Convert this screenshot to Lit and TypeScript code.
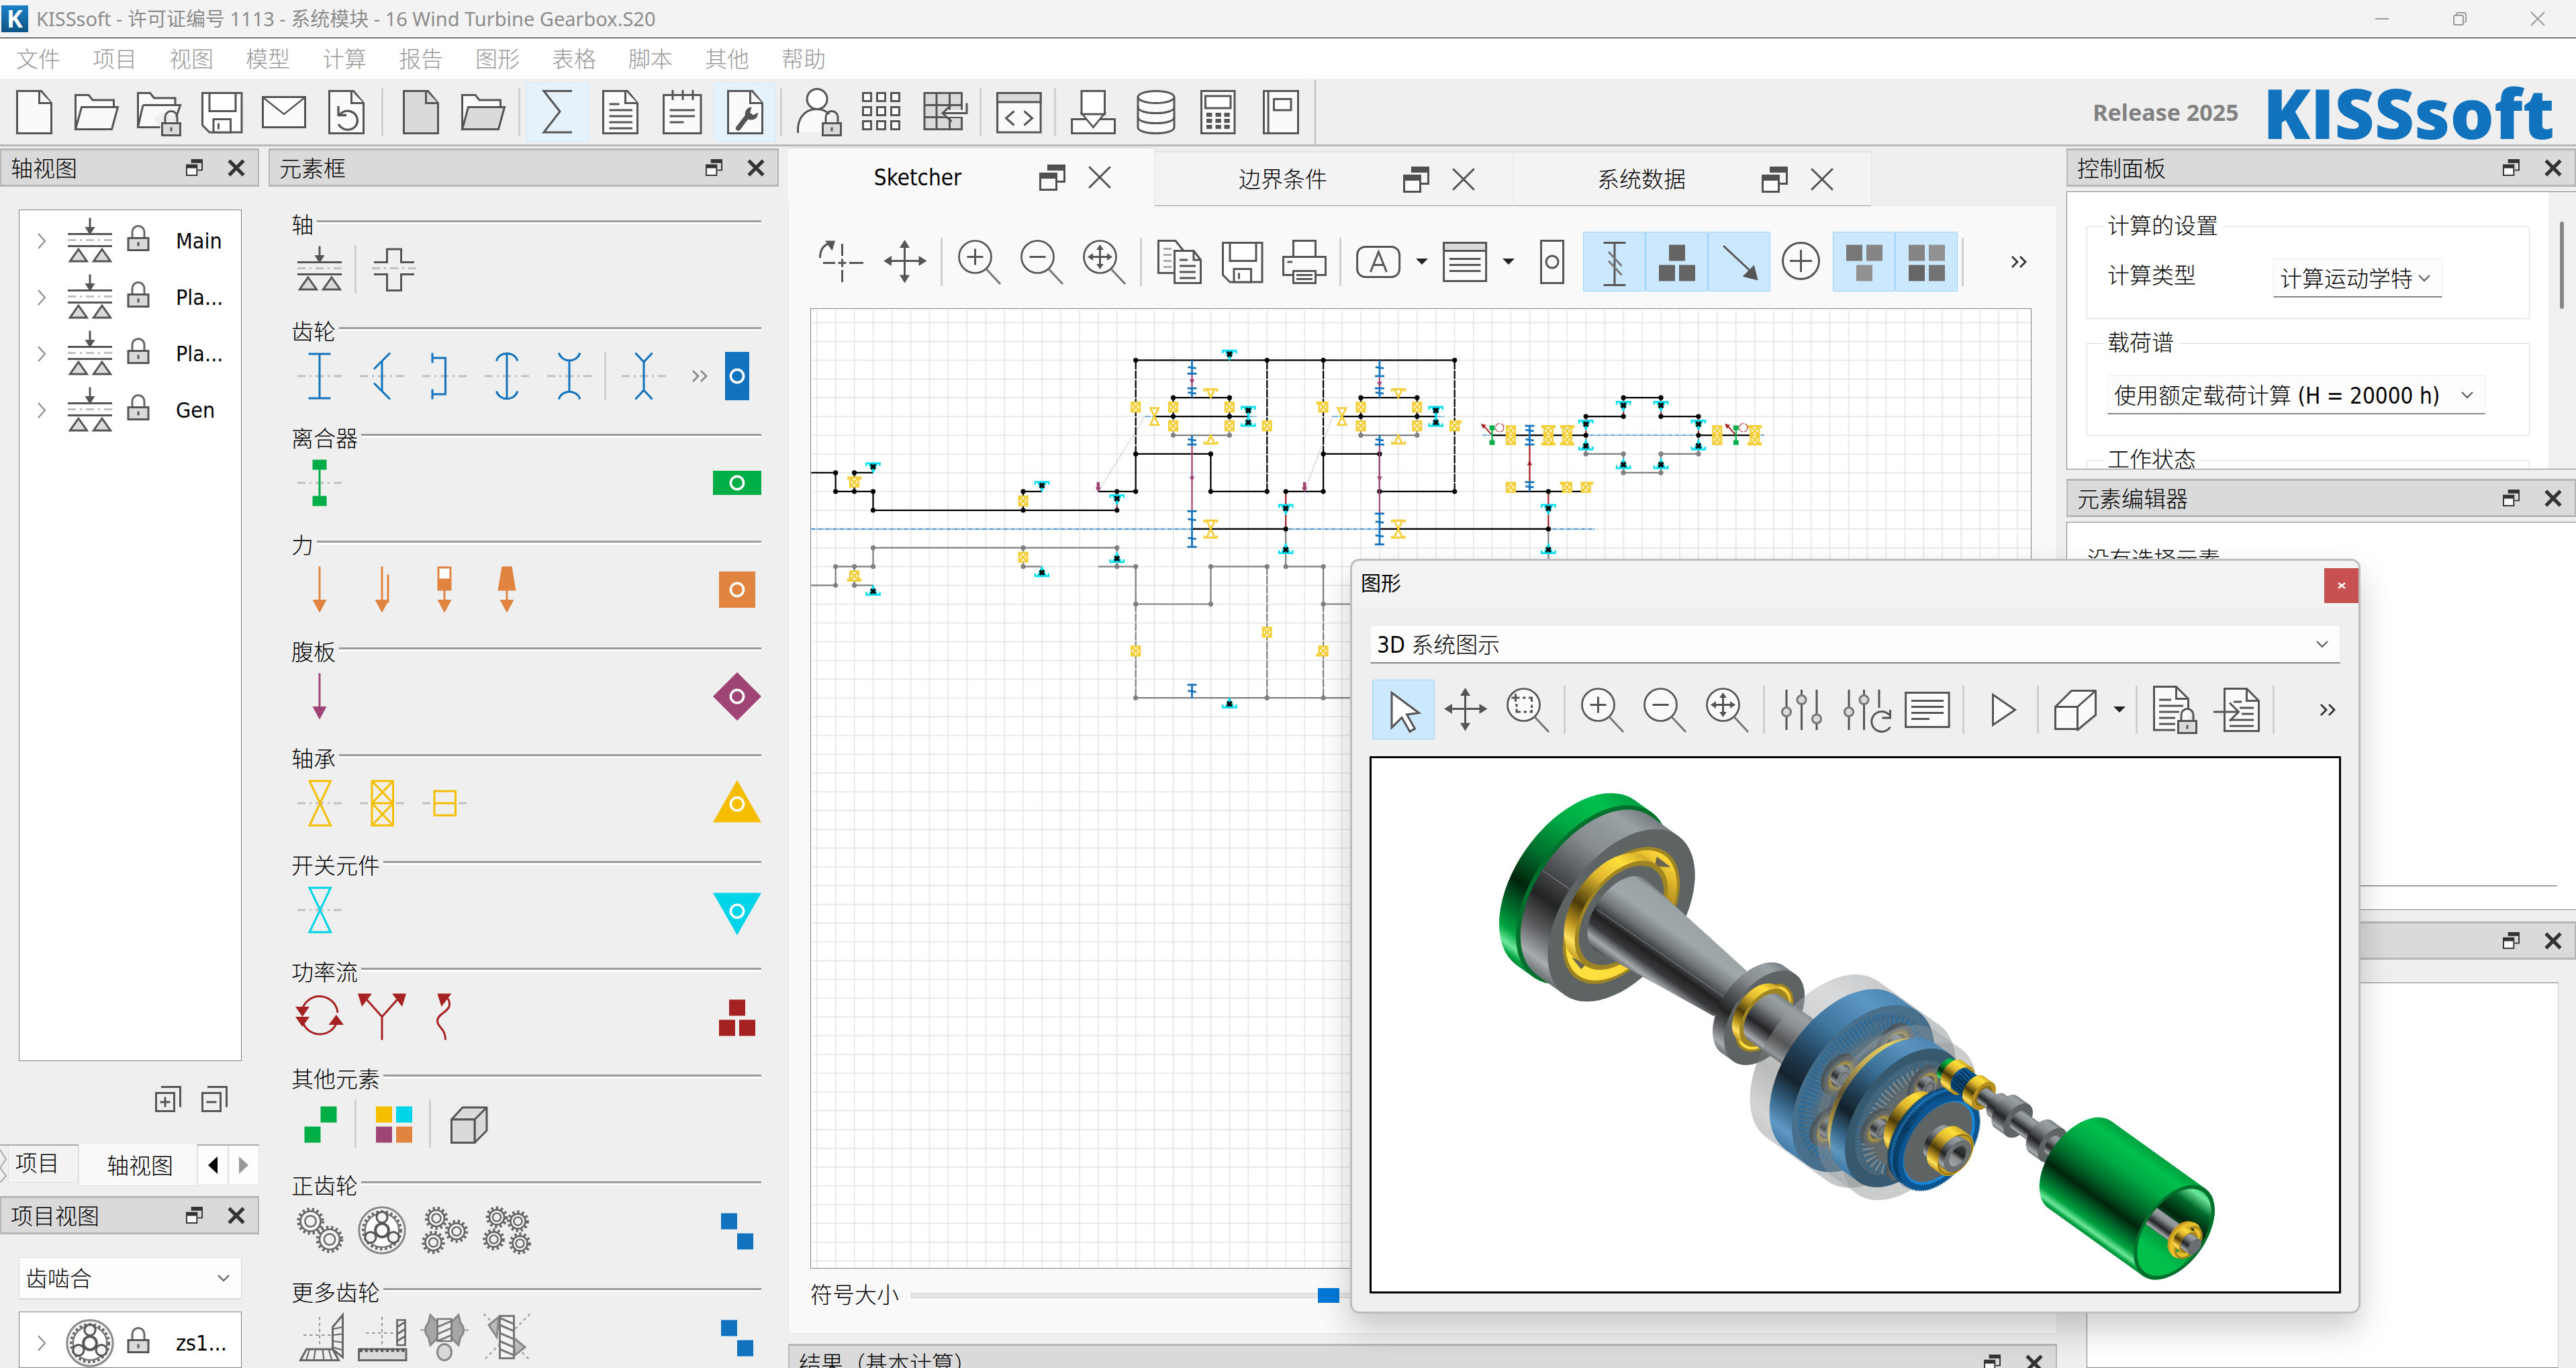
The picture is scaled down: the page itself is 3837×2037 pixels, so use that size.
import { LitElement, html, svg, css, nothing } from "lit";
import { customElement, property, state } from "lit/decorators.js";
import { classMap } from "lit/directives/class-map.js";

/* ---------------------------------------------------------------- icons */

const LINE = "#555";
const PAPER = "#fafafa";
const GREY = "#dadada";
const BLUE = "#1173bd";
const GREEN = "#00ae45";
const ORANGE = "#e08440";
const PURPLE = "#9f4576";
const YELLOW = "#f6be00";
const CYAN = "#00d4e8";
const RED = "#a62222";

const lock = svg`<path d="M15 17v-2.5a3 3 0 0 1 6 0v2.5" fill="none" stroke=${LINE}/>
  <path d="M13.500 17.500h9v6h-9z" fill=${GREY} stroke=${LINE}/><path d="M18 19.500v2" stroke=${LINE}/>`;
const docShape = (fill: string) => svg`<path d="M3.500 1.500h12l5 6v15h-17z" fill=${fill} stroke=${LINE}/>
  <path d="M14.500 1.500v6h6" fill=${fill} stroke=${LINE}/>`;
const folderShape = (fill: string) => svg`<path d="M1.500 20.500v-17h6.500l2 2.500h10.500v4" fill="#fafafa" stroke=${LINE}/>
  <path d="M4.500 9.500h18l-3 11h-18z" fill=${fill} stroke=${LINE}/>`;
const axisDash = svg`<path d="M1 12h22" stroke="#c0c0c0" stroke-dasharray="4 2 1 2"/>`;
const lens = svg`<circle cx="9.500" cy="9.500" r="8" fill=${PAPER} stroke=${LINE} stroke-width=".9"/><path d="M15 15.500l7 7.500" stroke="#777"/>`;
const arrows4 = svg`<path d="M11.500 2v19M2 11.500h19" stroke=${LINE}/>
  <path d="M11.500 1l2.500 4h-5zM11.500 22.500l2.500-4h-5zM1 11.500l4-2.500v5zM22.500 11.500l-4-2.500v5z" fill=${LINE}/>`;
const floppy = svg`<path d="M2.500 2.500h19.500v19.500h-16l-3.500-3.500z" fill="#fff" stroke=${LINE}/>
  <path d="M6 2.500h13v9h-13z" fill="#fff" stroke=${LINE}/><path d="M8 15.500h8.500v6.500h-8.500z" fill="#fff" stroke=${LINE}/><path d="M10.500 17.500v3" stroke=${LINE}/>`;
const ring = (y = 12) => svg`<circle cx="12" cy=${y} r="3.200" fill="none" stroke="#fff" stroke-width="1.200"/>`;
const cog = (x: number, y: number, r: number) => svg`
  <circle cx=${x} cy=${y} r=${r + 1} fill="none" stroke="#666" stroke-width="1.500" stroke-dasharray="1.100 1.300"/>
  <circle cx=${x} cy=${y} r=${r} fill="#f4f4f4" stroke="#666" stroke-width=".9"/>
  <circle cx=${x} cy=${y} r=${r * 0.55} fill="#f0f0f0" stroke="#666" stroke-width=".8"/>`;
const planetary = svg`<circle cx="12" cy="12" r="11.400" fill="#f4f4f4" stroke="#888" stroke-width="1"/>
  <circle cx="12" cy="12" r="9.300" fill="none" stroke="#666" stroke-width="1.400" stroke-dasharray="1.200 1.200"/>
  <circle cx="12" cy="12" r="8.400" fill="#fff" stroke="#777" stroke-width=".8"/>
  <circle cx="12" cy="12" r="3.300" fill="#fff" stroke="#555" stroke-width="1.300"/>
  <circle cx="12" cy="5.500" r="2.700" fill="#f4f4f4" stroke="#555"/><circle cx="6.300" cy="15.500" r="2.700" fill="#f4f4f4" stroke="#555"/>
  <circle cx="17.700" cy="15.500" r="2.700" fill="#f4f4f4" stroke="#555"/>`;
const shaftSupport = svg`<path d="M12 .5v7" stroke=${LINE}/><path d="M9.500 5h5l-2.500 4z" fill=${LINE}/>
  <path d="M1 8.500h22M1 14.500h22" stroke=${LINE}/><path d="M1 11.500h22" stroke="#c0c0c0" stroke-dasharray="4 2 1 2"/>
  <path d="M6.300 16l4.200 6h-8.400zM18 16l4.200 6h-8.400z" fill=${GREY} stroke=${LINE}/>`;
const forceArrow = (c: string) => svg`<path d="M12 .5v19" stroke=${c}/><path d="M8.500 17h7l-3.500 6.500z" fill=${c}/>`;
const squares = (c: string[], at: number[][]) => at.map((p, i) => svg`<rect x=${p[0]} y=${p[1]} width="8" height="8" fill=${c[i % c.length]}/>`);
const hourglass = (c: string) => svg`${axisDash}<path d="M7 1h10.500l-10.500 22h10.500z" fill="none" stroke=${c}/>`;

const ICONS: Record<string, unknown> = {
  doc: docShape(PAPER),
  docGrey: docShape(GREY),
  folder: folderShape(PAPER),
  folderGrey: folderShape(GREY),
  folderLock: svg`<path d="M1.500 19.500v-17h6l2 2.500h10.500v3.500" fill=${PAPER} stroke=${LINE}/>
    <path d="M4 8.500h18.500l-2 6M4 8.500l-2.500 11h11" fill=${PAPER} stroke=${LINE}/>${lock}`,
  save: floppy,
  mail: svg`<path d="M1.500 4.500h21v15h-21z" fill=${PAPER} stroke=${LINE}/><path d="M2 5l10 8 10-8" fill="#fff" stroke=${LINE} stroke-width=".8"/>`,
  restore: svg`${docShape(PAPER)}<path d="M8 9v4.500h4M8.500 13.500c3-4 9-2 9 3-.5 4.500-6.500 6-9.500 1.500" fill="none" stroke=${LINE} stroke-width="1.100"/>`,
  sigma: svg`<path d="M19 1.500h-14l8 10.200-8 10.300h14" fill="none" stroke=${LINE}/>`,
  report: svg`${docShape(PAPER)}<path d="M6.500 8h5M6.500 11h11.500M6.500 14h11.500M6.500 17h11.500M6.500 20h11.500" stroke=${LINE}/>`,
  notepad: svg`<path d="M2.500 3.500h18.500v19h-18.500z" fill=${PAPER} stroke=${LINE}/><path d="M7 1v5M12 1v5M17 1v5M5.500 11h12.500M5.500 14h12.500M5.500 17h7" stroke=${LINE}/>`,
  wrench: svg`${docShape(PAPER)}<path d="M8.500 20l5-6.500" stroke=${LINE} stroke-width="2.400" stroke-linecap="round"/>
    <path d="M12.500 15c-1.500-3 .3-5.500 2.700-5.500l-.8 2.700 1.600 1.300 2.300-1.300c.2 3-2.500 4.800-5.800 2.800z" fill=${LINE}/>`,
  userLock: svg`<circle cx="10.700" cy="5.500" r="5" fill="#fff" stroke=${LINE}/><path d="M1.200 22c-.5-7 3-11.500 9.500-11.500 4 0 6 2 7 4.500l-5 7z" fill=${PAPER}/>
    <path d="M1.200 22.300c-.5-7 3-11.800 9.500-11.800 2.500 0 4.500 1 6 2.500" fill="none" stroke=${LINE}/>${lock}`,
  grid: [2, 9, 16].flatMap((y) => [2, 9, 16].map((x) => svg`<rect x=${x + 0.5} y=${y + 0.5} width="4" height="4" fill="#fff" stroke=${LINE}/>`)),
  tableIn: svg`<path d="M2 2.500h18.500v18h-18.500z" fill=${GREY} stroke=${LINE}/><path d="M8 2.500v18M14.500 2.500v18M2 8.500h18M2 14.500h18" stroke=${LINE}/>
    <path d="M23.500 6v6.600h-12" stroke="#efefef" stroke-width="3.500" fill="none"/><path d="M23 7.500v5h-12M15.500 8.300l-4.500 4.200 4.500 4.200" fill="none" stroke=${LINE}/>`,
  script: svg`<path d="M1.200 2.500h21.500v19.500h-21.500z" fill=${PAPER} stroke=${LINE}/><path d="M1.200 2.500h21.500v4.500h-21.500z" fill=${GREY} stroke=${LINE}/>
    <path d="M9.500 11.500l-4 3.500 4 3.500M14.500 11.500l4 3.500-4 3.500" fill="none" stroke=${LINE}/>`,
  download: svg`<path d="M1.200 15.500h21.300v7h-21.300z" fill=${PAPER} stroke=${LINE}/><path d="M6 12.500l5.800 7 5.700-7z" fill="#fff" stroke=${LINE} stroke-width=".9"/><path d="M6 1.500h11.500v11.500h-11.500z" fill="#fff" stroke=${LINE}/>`,
  db: svg`<path d="M3 4.500v15c0 4 18 4 18 0v-15" fill=${PAPER} stroke=${LINE}/><ellipse cx="12" cy="4.500" rx="9" ry="3" fill="#fff" stroke=${LINE}/>
    <path d="M3 9.500c0 4 18 4 18 0M3 14.500c0 4 18 4 18 0" fill="none" stroke=${LINE}/>`,
  calc: svg`<path d="M3.500 1.500h16.500v21h-16.500z" fill=${PAPER} stroke=${LINE}/><path d="M5.500 4h12.500v6h-12.500z" fill="#fff" stroke=${LINE}/>
    ${[12.3, 15.3, 18.3].map((y) => [6, 10.5, 14.8].map((x) => svg`<rect x=${x} y=${y} width="2.800" height="2" fill=${LINE}/>`))}`,
  book: svg`<path d="M3.500 1.500h17v21h-17z" fill=${PAPER} stroke=${LINE}/><path d="M5.700 1.500v21" stroke=${LINE}/><path d="M8.500 5.500h8.500v5.500h-8.500z" fill="#fff" stroke=${LINE}/>`,
  axis: svg`<path d="M11.500 3v6M11.500 16v6M2 12.500h6M15 12.500h7M9.500 12.500h4M11.500 10.500v4" stroke=${LINE}/><path d="M.5 10c0-4 1.500-6 4-7" fill="none" stroke=${LINE}/><path d="M3 1.500h5l-1.500 5z" fill=${LINE}/>`,
  move: arrows4,
  zoomIn: svg`${lens}<path d="M5.500 9.500h8M9.500 5.500v8" stroke=${LINE}/>`,
  zoomOut: svg`${lens}<path d="M5.500 9.500h8" stroke=${LINE}/>`,
  zoomFit: svg`${lens}<path d="M9.500 5v9M5 9.500h9" stroke=${LINE}/><path d="M9.500 3.300l1.800 2.700h-3.600zM9.500 15.700l1.800-2.700h-3.600zM3.300 9.500l2.700-1.800v3.600zM15.700 9.500l-2.700-1.800v3.600z" fill=${LINE}/>`,
  zoomRect: svg`${lens}<path d="M5.500 4v4M3.500 6h4M9 6h1.500M12 6h1.500v2M13.500 9.500v1.500M6 9v1.500M6 11.500v1.500h2M9.500 13h1.500M12.500 13h1v-1" fill="none" stroke=${LINE}/>`,
  copy: svg`<path d="M1.500 1.500h8.500l4 5v11h-12.500z" fill=${PAPER} stroke=${LINE}/><path d="M4 5.500h4M4 8.500h4M4 11.500h4M4 14.500h4" stroke="#aaa"/>
    <path d="M9.500 6.500h9.500l3.500 4.500v11.500h-13z" fill=${PAPER} stroke=${LINE}/><path d="M19 6.500v4.500h3.500M12 11h4M12 14h8M12 17h8M12 20h8" fill="none" stroke=${LINE}/>`,
  print: svg`<path d="M6.500 1.500h11v8h-11z" fill="#fff" stroke=${LINE}/><path d="M1.500 9.500h21v9h-21z" fill=${PAPER} stroke=${LINE}/>
    <path d="M6.500 16.500h11v6h-11z" fill="#fff" stroke=${LINE}/><path d="M3.500 12h2.500M8 18.500h8M8 20.500h8" stroke=${LINE}/>`,
  label: svg`<rect x="1.200" y="4.500" width="21" height="15" rx="4" fill=${PAPER} stroke=${LINE}/><path d="M7.800 17l4-10 4 10M9.300 13.500h5" fill="none" stroke=${LINE}/>`,
  list: svg`<path d="M1.200 2.500h21v19h-21z" fill=${PAPER} stroke=${LINE}/><path d="M1.200 2.500h21v4h-21z" fill=${GREY} stroke=${LINE}/><path d="M4 10.500h15.500M4 13.500h15.500M4 16.500h15.500" stroke=${LINE}/>`,
  pinDoc: svg`<path d="M6.500 1.500h11v21h-11z" fill=${PAPER} stroke=${LINE}/><circle cx="12" cy="12" r="3" fill="none" stroke=${LINE}/>`,
  gearSym: svg`<path d="M6.500 2.500h11M12 2.500v21M6.500 23.500h11" stroke=${LINE}/><path d="M9 7l6.500 7M9 11.500l6.500 7" stroke="#777"/>`,
  blocks3: squares(["#646464"], [[8, 3.5], [3, 13.5], [13, 13.5]]),
  blocksV: squares(["#777", "#858585", "#919191"], [[3, 3.5], [13, 3.5], [8, 13.5]]),
  blocks4: squares(["#858585", "#919191", "#666", "#737373"], [[3, 3.5], [13, 3.5], [3, 13.5], [13, 13.5]]),
  diag: svg`<path d="M4 4l15 14" stroke=${LINE}/><path d="M20.500 20.500l-1.500-6-4.500 4.500z" fill=${LINE} stroke=${LINE}/>`,
  plus: svg`<circle cx="11.500" cy="11.500" r="9" fill=${PAPER} stroke=${LINE}/><path d="M11.500 6v11M6 11.500h11" stroke=${LINE}/>`,
  more: svg`<path d="M7 8l4 4-4 4M13 8l4 4-4 4" fill="none" stroke="currentColor" stroke-width="1.400"/>`,
  pointer: svg`<path d="M6 3.500l13.500 10-6 .8 4 7-2.500 1.500-4-7-5 5z" fill="#fff" stroke=${LINE}/>`,
  sliders: svg`<path d="M4 2v20M11.500 2v20M19 2v20" stroke=${LINE}/><circle cx="4" cy="13" r="2.200" fill=${GREY} stroke="#777"/><circle cx="11.500" cy="7" r="2.200" fill=${GREY} stroke="#777"/><circle cx="19" cy="16.500" r="2.200" fill=${GREY} stroke="#777"/>`,
  slidersReset: svg`<path d="M4 2v20M11.500 2v20M19 2v9" stroke=${LINE}/><circle cx="4" cy="13" r="2.200" fill=${GREY} stroke="#777"/><circle cx="11.500" cy="7" r="2.200" fill=${GREY} stroke="#777"/>
    <path d="M24 14.500a5 5 0 1 0 .5 6M24.500 12v4h-4" fill="none" stroke=${LINE}/>`,
  text: svg`<path d="M1.200 3.500h21.500v17h-21.500z" fill=${PAPER} stroke=${LINE}/><path d="M4 7.500h16M4 10.500h16M4 13.500h16M4 16.500h9" stroke=${LINE}/>`,
  play: svg`<path d="M7.500 4.500l11 7.500-11 7.500z" fill=${PAPER} stroke=${LINE}/>`,
  cube: svg`<path d="M1.500 10.500l8-8h12l-9 8zM21.500 2.500v12l-9 7.500v-11.500" fill=${PAPER} stroke=${LINE} stroke-linejoin="round"/><path d="M1.500 10.500h11v11h-11z" fill=${PAPER} stroke=${LINE}/>`,
  docLock: svg`<path d="M1.500 .5h11l6 6v15.500h-17z" fill=${PAPER}/><path d="M18.500 12v-5.500l-6-6h-11v21.500h10.500M12.500 .5v6h6M4 7h6M4 10h12M4 13h10M4 16h8M4 19h8" fill="none" stroke=${LINE}/>${lock}`,
  docImport: svg`<path d="M5.500 1.500h11l6 6v15h-17z" fill=${PAPER} stroke=${LINE}/><path d="M16.500 1.500v6h6M10 8h4M13 11h7M14 14h6M8 17h12M8 20h12" fill="none" stroke=${LINE}/>
    <path d="M0 13h12M8 8.500l4.500 4.500-4.500 4.500" fill="none" stroke=${LINE}/>`,
  shaft: shaftSupport,
  shaftStep: svg`<path d="M2 8.500h6.500v-6.500h7v6.500h6.500M2 14.500h6.500v8h7v-8h6.500" fill="none" stroke=${LINE}/><path d="M1 11.500h22" stroke="#c0c0c0" stroke-dasharray="4 2 1 2"/>`,
  g1: svg`${axisDash}<path d="M6.500 1h11M12 1v22M6.500 23h11" stroke=${BLUE}/>`,
  g2: svg`${axisDash}<path d="M16 .5l-8 8M12 4.500v15M16 23.500l-8-8" fill="none" stroke=${BLUE}/>`,
  g3: svg`${axisDash}<path d="M6 .5v5M6 3h6.500v18h-6.500M6 18.500v5" fill="none" stroke=${BLUE}/>`,
  g4: svg`${axisDash}<path d="M12 1v22M6.800 4.500c1.500-5 9-5 10.500 0M6.800 19.500c1.500 5 9 5 10.500 0" fill="none" stroke=${BLUE}/>`,
  g5: svg`${axisDash}<path d="M12 4.500v15M6.800 .5c1.500 5 9 5 10.500 0M6.800 23.500c1.500-5 9-5 10.500 0" fill="none" stroke=${BLUE}/>`,
  g6: svg`${axisDash}<path d="M12 5v14M7.800 .5l4.200 4.500 4.200-4.500M7.800 23.500l4.200-4.500 4.200 4.500" fill="none" stroke=${BLUE}/>`,
  gAll: svg`<path d="M6 0h12v24h-12z" fill=${BLUE}/>${ring()}`,
  clutch: svg`${axisDash}<path d="M12 3v18" stroke=${GREEN}/><path d="M8.500 .5h7v5h-7zM8.500 18.500h7v5h-7z" fill=${GREEN}/>`,
  clutchAll: svg`<path d="M0 6h24v12h-24z" fill=${GREEN}/>${ring()}`,
  f1: forceArrow(ORANGE),
  f2: svg`${forceArrow(ORANGE)}<path d="M15 4.500v14" stroke=${ORANGE}/>`,
  f3: svg`${forceArrow(ORANGE)}<path d="M8.500 .5h7v12h-7z" fill=${ORANGE}/><path d="M9.500 1.500h5v5h-5z" fill="#fff"/>`,
  f4: svg`${forceArrow(ORANGE)}<path d="M9.500 .5h5l2 12h-9z" fill=${ORANGE}/>`,
  fAll: svg`<path d="M3 3h18v18h-18z" fill=${ORANGE}/>${ring()}`,
  web: forceArrow(PURPLE),
  webAll: svg`<path d="M12 0l12 12-12 12-12-12z" fill=${PURPLE}/>${ring()}`,
  b1: hourglass(YELLOW),
  b2: svg`${axisDash}<path d="M7 1h10.500v22h-10.500zM7 12h10.500M7 1l10.500 11M17.500 1l-10.500 11M7 12l10.500 11M17.500 12l-10.500 11" fill="#f2efe6" stroke=${YELLOW}/>`,
  b3: svg`${axisDash}<path d="M7 6h10.500v12h-10.500zM7 12h10.500" fill="#f0efec" stroke=${YELLOW}/>`,
  bAll: svg`<path d="M12 .5l12 21h-24z" fill=${YELLOW}/>${ring(12.4)}`,
  sw: hourglass(CYAN),
  swAll: svg`<path d="M0 3.500h24l-12 21z" fill=${CYAN}/>${ring(12.6)}`,
  p1: svg`<path d="M3.500 8a9 9 0 0 1 17.500 2M4 15.500a9 9 0 0 0 16.500-.5" fill="none" stroke=${RED}/>
    <path d="M0 7h7l-3.500 5zM0 12h7l-3.500 5zM16.500 16h7.500l-3.700-5z" fill=${RED}/>`,
  p2: svg`<path d="M12 23.500v-11.500l-8-9M12 12l8-9" fill="none" stroke=${RED}/><path d="M0 .5h7l-5 6.500zM24 .5h-7l5 6.500z" fill=${RED}/>`,
  p3: svg`<path d="M12.500 23.500c0-6-4-6-4-9.500s6-4.500 6-8-1.500-3.500-3-3.500" fill="none" stroke=${RED}/><path d="M8.500 .5h7l-5 6.500z" fill=${RED}/>`,
  pAll: squares([RED], [[8, 3.5], [3, 13.5], [13, 13.5]]),
  o1: squares([GREEN], [[12.5, 3.5], [4.5, 13.5]]),
  o2: squares([YELLOW, CYAN, PURPLE, ORANGE], [[3, 3.5], [13, 3.5], [3, 13.5], [13, 13.5]]),
  o3: svg`<path d="M3.500 10l5.500-6h12l-6 6zM21 4v11.500l-6 6v-11.500" fill=${GREY} stroke=${LINE} stroke-linejoin="round"/><path d="M3.500 10h11.500v11.500h-11.500z" fill=${GREY} stroke=${LINE}/>`,
  s1: svg`${cog(7.5, 7.5, 5)}${cog(17, 16.5, 5)}`,
  s2: planetary,
  s3: svg`${cog(8, 6, 4)}${cog(18, 12.5, 4)}${cog(6.5, 18, 4)}`,
  s4: svg`${cog(7, 5.5, 3.7)}${cog(17.5, 7.5, 3.7)}${cog(5.5, 16.5, 3.7)}${cog(18.5, 18.5, 3.7)}`,
  sAll: squares([BLUE], [[4, 3.5], [12, 13.5]]),
  m1: svg`<path d="M12 2v15M4 11h14" stroke="#999" stroke-dasharray="1.500 1.500" stroke-width=".7"/>
    <path d="M2.500 23.500l3-5.500h13l3 5.500z" fill="#eee" stroke="#666"/><path d="M7 18l-1.500 5M10 18l-.8 5M13.500 18l.6 5M16.500 18l1.500 5" stroke="#666" stroke-width=".7"/>
    <path d="M23.500 1v21l-5-4v-11z" fill="#eee" stroke="#666"/><path d="M18.500 8l5-1M18.500 11l5-.6M18.500 14l5 .6M18.500 17l5 1.500" stroke="#666" stroke-width=".7"/>`,
  m2: svg`<path d="M12 2v15M4 10h14" stroke="#999" stroke-dasharray="1.500 1.500" stroke-width=".7"/><path d="M.5 18h23.500v5.500h-23.500z" fill=${GREY} stroke="#666"/>
    <path d="M1 18.500h23" stroke="#555" stroke-width="1.800" stroke-dasharray="1.300 1.300"/><path d="M19.500 3.500h4v12.500h-4zM19.500 7l4-2.500M19.500 10.500l4-2.500M19.500 14l4-2.500" fill="#eee" stroke="#666" stroke-width=".9"/>`,
  m3: svg`<path d="M0 8.500h24" stroke="#999" stroke-width=".7"/><path d="M5 1l3 3h8l3-3 1 4c2 2 2 5 0 7l-1 4-3-3h-8l-3 3-1-4c-2-2-2-5 0-7z" fill="#a6a6a6" stroke="#888"/>
    <path d="M8.500 3h7v11h-7zM8.500 7l7-3M8.500 10.500l7-3M8.500 14l7-3" fill="#eee" stroke="#777" stroke-width=".9"/><ellipse cx="12" cy="19.500" rx="3.500" ry="4" fill=${GREY} stroke="#888"/>`,
  m4: svg`<path d="M.5 .5l23 23M23.500 .5l-23 23" stroke="#999" stroke-dasharray="1.500 1.500" stroke-width=".7"/><path d="M8 2l-5 4 4 6zM15 12l6 5-5 4z" fill="#bbb" stroke="#888"/>
    <path d="M8.500 1.500h7v21h-7zM8.500 6l7 3M8.500 10l7 3M8.500 14l7 3M8.500 18l7 3M8.500 2.500l7 3" fill="#f4f4f4" stroke="#777"/>`,
  lock: svg`<path d="M9 10v-2.500a3 3 0 0 1 6 0v2.500" fill="none" stroke="#666"/><path d="M7 10.500h10v6h-10z" fill=${GREY} stroke=${LINE}/><path d="M12 12.500v2" stroke=${LINE}/>`,
};

const icon = (name: string) =>
  html`<svg class="icon" viewBox="0 0 24 24" aria-hidden="true">${svg`${ICONS[name]}`}</svg>`;

const floatIcon = (cls: string, dark: string) => html`<svg class=${cls} viewBox="0 0 13 13" aria-hidden="true">
  <path d="M4 0h9v9h-4v-1h3v-5h-8z" fill=${dark}/><path d="M0 4h9v9h-9z" fill=${dark}/>
  <path d="M1 7h7v5h-7z" fill="#fafafa"/></svg>`;
const crossIcon = (cls: string, dark: string, w: number) => html`<svg class=${cls} viewBox="0 0 12 12" aria-hidden="true">
  <path d="M1 1l10 10M11 1l-10 10" stroke=${dark} stroke-width=${w}/></svg>`;
const chevron = html`<svg class="chevron" viewBox="0 0 18 12" aria-hidden="true"><path d="M1 2l8 8 8-8" fill="none" stroke="#555" stroke-width="2"/></svg>`;

/* ------------------------------------------------------- shared styling */

const shared = css`
  * { box-sizing: border-box; }
  button, select, input { font: inherit; color: inherit; margin: 0; }
  button { border: 0; background: none; padding: 0; display: grid; place-items: center; }
  .icon { width: 72px; height: 72px; display: block; overflow: visible; }
  .tool { width: 93px; height: 89px; flex: none; border: 1px solid transparent; border-radius: 2px; }
  .tool.soft { background: #e5f2fc; border-color: #cfe8fb; }
  .tool.on { background: #cce8ff; border-color: #99d1ff; }
  .rule { width: 3px; height: 72px; margin: 0 9px 0 6px; background: #d0d0d0; flex: none; align-self: center; }
  .drop { width: 36px; height: 89px; flex: none; }
  .drop::before { content: ""; border: 9px solid transparent; border-top-color: #222; border-bottom: 0; }
  .pick { display: grid; align-items: center; background: #fdfdfd; border: 1px solid #ececec; border-bottom: 2px solid #868686; }
  .pick > * { grid-area: 1 / 1; }
  .pick select { appearance: none; width: 100%; height: 100%; border: 0; background: none; outline: none; padding: 4px 44px 0 9px; }
  .chevron { width: 18px; height: 12px; justify-self: end; margin-right: 17px; pointer-events: none; }
`;

type Tool = string | { icon: string; tone?: string; drop?: boolean; label: string };
const tools = (items: Tool[]) =>
  items.map((t) =>
    t === "|"
      ? html`<span class="rule"></span>`
      : typeof t === "string"
        ? html`<button class="tool" aria-label=${t}>${icon(t)}</button>`
        : html`<button class=${classMap({ tool: true, soft: t.tone === "soft", on: t.tone === "on" })} aria-label=${t.label}>${icon(t.icon)}</button>
            ${t.drop ? html`<button class="drop" aria-label=${t.label + " ▾"}></button>` : nothing}`
  );

/* ------------------------------------------------------------ dock panel */

@customElement("dock-panel")
export class DockPanel extends LitElement {
  @property() heading = "";
  static styles = [
    shared,
    css`
      :host { display: flex; flex-direction: column; min-height: 0; min-width: 0; }
      header { flex: none; height: 57px; display: flex; align-items: center; padding: 0 19px 0 14px; background: #dadada; border: 3px solid #b6b6b6; border-width: 3px 2px; }
      h2 { flex: 1; margin: 0; padding-top: 4px; font: inherit; white-space: nowrap; }
      button { width: 26px; height: 30px; margin-left: 37px; }
      .f { width: 25px; height: 27px; }
      .c { width: 26px; height: 26px; }
    `,
  ];
  render() {
    return html`<header><h2>${this.heading}</h2>
        <button aria-label="float">${floatIcon("f", "#333")}</button>
        <button aria-label="close">${crossIcon("c", "#333", 2.4)}</button></header>
      <slot></slot>`;
  }
}

/* ----------------------------------------------------- system sketch */

type Pt = [number, number];
const poly = (pts: Pt[], c: string, extra = "") => svg`<polyline points=${pts.map((p) => p.join(",")).join(" ")} fill="none" stroke=${c} stroke-dasharray=${extra || "none"}/>`;
const dots = (pts: Pt[], c: string) => pts.map((p) => svg`<circle cx=${p[0]} cy=${p[1]} r=".13" fill=${c}/>`);
const BY = "#f5cf3a";
const boxB = (x: number, y: number, ears = "") => svg`<g transform=${`translate(${x} ${y})`} stroke=${BY} stroke-width=".1" fill="#fffbe8">
  <path d="M-.22-.24h.44v.48h-.44zM-.22-.24l.44.48M.22-.24l-.44.48"/>
  ${ears.includes("t") ? svg`<path d="M-.33-.13v-.12h.66v.12" fill="none"/>` : nothing}
  ${ears.includes("b") ? svg`<path d="M-.33.13v.12h.66v-.12" fill="none"/>` : nothing}
  ${ears.includes("l") ? svg`<path d="M-.33-.13v-.12h.15" fill="none"/>` : nothing}
  ${ears.includes("r") ? svg`<path d="M.33-.13v-.12h-.15" fill="none"/>` : nothing}
  ${ears.includes("m") ? svg`<path d="M-.33.13v.12h.15" fill="none"/>` : nothing}</g>`;
const pairB = (x: number, y: number, ears = "") => svg`${boxB(x, y - 0.24, ears.includes("t") ? "t" : "")}${boxB(x, y + 0.24, ears.includes("b") ? "b" : "")}`;
const sw = (x: number, y: number, s: number) => svg`<g transform=${`translate(${x} ${y}) scale(1 ${s})`}><path d="M-.36-.36v-.15h.72v.15" fill="none" stroke="#00dff0" stroke-width=".09"/>
  <path d="M-.27-.52h.54l-.27.58z" fill="#00dff0"/><path d="M-.12-.44l.24.24M.12-.44l-.24.24" stroke="#000" stroke-width=".12"/></g>`;
const hourB = (x: number, y: number, ears: boolean) => svg`<g transform=${`translate(${x} ${y})`} stroke=${BY} fill="#fff" stroke-width=".1">
  <path d="M-.22-.45h.44l-.44.9h.44z"/>${ears ? svg`<path d="M-.34-.35v-.1h.68v.1M-.34.35v.1h.68v-.1" fill="none"/>` : nothing}</g>`;
const triB = (x: number, y: number, s: number) => svg`<g transform=${`translate(${x} ${y}) scale(1 ${s})`} stroke=${BY} fill="#fff" stroke-width=".1">
  <path d="M-.34-.33v-.12h.68v.12" fill="none"/><path d="M-.2-.44h.4l-.2.42z"/></g>`;
const gearL = (x: number, a: number, b: number, ends: number[], ticks: number[]) => svg`<g stroke=${BLUE} stroke-width=".1"><path d=${`M${x} ${a}V${b}`}/>
  ${ends.map((y) => svg`<path d=${`M${x - 0.25} ${y}h.5`}/>`)}${ticks.map((y) => svg`<path d=${`M${x - 0.22} ${y - 0.03}l.44.06`}/>`)}</g>`;
const webL = (x: number, a: number, b: number, at: number, c = PURPLE, dir = 1) => svg`<path d=${`M${x} ${a}V${b}`} stroke=${c}/>
  <path d=${`M${x - 0.13} ${at}h.26l-.13 ${dir * 0.28}z`} fill=${c}/>`;

const planetStage = (dx: number, gear: number, sun: number) => svg`
  <path d=${`M${17.5 + dx} 5h6`} stroke="#3c8ccb" stroke-width=".05" stroke-dasharray=".3 .06 .08 .06"/>
  ${poly([[19 + dx, 5], [19 + dx, 6], [22 + dx, 6], [22 + dx, 5]], "#808080")}
  ${dots([[19 + dx, 6], [22 + dx, 6]], "#808080")}
  ${poly([[19 + dx, 5], [19 + dx, 4], [22 + dx, 4], [22 + dx, 5]], "#000")}
  ${poly([[18 + dx, 5], [23 + dx, 5]], "#000")}
  ${dots([[19 + dx, 4], [22 + dx, 4], [19 + dx, 5], [22 + dx, 5]], "#000")}
  ${[19, 22].map((x) => [4.5, 5.5].map((y) => boxB(x + dx, y)))}
  ${hourB(18 + dx, 5, false)}${sw(23 + dx, 5, 1)}${sw(23 + dx, 5, -1)}
  ${triB(21 + dx, 4, 1)}${triB(21 + dx, 6, -1)}
  ${webL(20 + dx, gear, 3.5, gear + 0.3)}${webL(20 + dx, 6.5, sun, 8.2)}
  ${gearL(20 + dx, 2, gear, [gear], [2.4])}${gearL(20 + dx, 3.5, 4, [3.5], [3.75])}${gearL(20 + dx, 6, 6.5, [6.5], [6.25])}
  ${gearL(20 + dx, sun, 22 - sun, [sun, 22 - sun], [sun + 0.45, 21.55 - sun])}${hourB(21 + dx, 11, true)}`;

const generatorMark = (x: number) => svg`<g transform=${`translate(${x} 6)`}><path d="M-.05-.05l-.4-.45" stroke=${RED} stroke-width=".07"/><path d="M-.6-.62l.28.08-.16.2z" fill=${RED}/>
  <circle cx=".4" cy="-.4" r=".22" fill="none" stroke=${RED} stroke-width=".04" stroke-dasharray=".3 .06"/>
  <path d="M0-.4v.8" stroke=${GREEN}/><path d="M-.14-.52h.28v.25h-.28zM-.14.270h.28v.25h-.28z" fill=${GREEN}/></g>`;

const K = "#000";
const G = "#808080";
const sketch = svg`
  <path d="M-.3 11H41.500" stroke="#3c8ccb" stroke-width=".07" stroke-dasharray=".22 .05 .06 .05"/>
  <path d="M35.500 6H50.500" stroke="#3c8ccb" stroke-width=".05" stroke-dasharray=".22 .05 .06 .05"/>
  <path d="M17.500 5L15 9M27.500 5L26 9" stroke=${PURPLE} stroke-width=".03" stroke-dasharray=".05 .07"/>
  ${poly([[-0.3, 14], [1, 14], [1, 13], [3, 13], [3, 12], [16, 12], [16, 13]], G)}
  ${poly([[2, 13], [2, 14], [3, 14]], G)}${poly([[11, 12], [11, 13], [12, 13]], G)}
  ${poly([[15, 13], [17, 13], [17, 15], [21, 15], [21, 13], [24, 13]], G)}
  ${poly([[17, 15], [17, 20]], G, ".44 .06")}${poly([[24, 13], [24, 20]], G, ".44 .06")}${poly([[27, 15], [27, 20]], G, ".44 .06")}
  ${poly([[17, 20], [32, 20]], G)}${poly([[25, 11], [25, 13], [27, 13], [27, 15], [31, 15]], G)}${poly([[39, 11], [39, 13]], G)}
  ${poly([[41, 6], [41, 7], [43, 7], [43, 8], [45, 8], [45, 7], [47, 7], [47, 6]], G)}
  ${dots([[1, 14], [1, 13], [2, 13], [2, 14], [3, 13], [3, 12], [11, 12], [11, 13], [16, 12], [16, 13], [17, 13], [17, 15], [21, 15], [21, 13], [24, 13], [17, 20], [24, 20], [27, 20], [25, 13], [27, 13], [27, 15], [41, 7], [43, 7], [43, 8], [45, 8], [45, 7], [47, 7]], G)}
  ${poly([[16, 9], [16, 10]], RED)}${poly([[25, 9], [25, 11]], RED)}${poly([[39, 9], [39, 11]], RED)}
  ${poly([[-0.3, 8], [1, 8], [1, 9], [3, 9], [3, 10], [16, 10]], K)}
  ${poly([[3, 8], [2, 8], [2, 9]], K)}${poly([[12, 9], [11, 9], [11, 10]], K)}
  ${poly([[15, 9], [17, 9], [17, 7], [21, 7], [21, 9], [24, 9]], K)}
  ${poly([[17, 7], [17, 2]], K, ".44 .06")}${poly([[24, 9], [24, 2]], K, ".44 .06")}${poly([[27, 7], [27, 2]], K, ".44 .06")}${poly([[34, 9], [34, 2]], K, ".44 .06")}
  ${poly([[17, 2], [34, 2]], K)}${poly([[25, 9], [27, 9], [27, 7], [30, 7], [30, 9], [34, 9]], K)}
  ${poly([[20, 11], [25, 11]], K)}${poly([[30, 11], [39, 11]], K)}${poly([[37, 9], [41, 9]], K)}${poly([[36, 6], [41, 6]], K)}${poly([[47, 6], [50, 6]], K)}
  ${poly([[41, 6], [41, 5]], RED)}${poly([[43, 5], [43, 4]], RED)}${poly([[45, 4], [45, 5]], RED)}${poly([[47, 5], [47, 6]], RED)}
  ${poly([[41, 5], [43, 5]], K)}${poly([[43, 4], [45, 4]], K)}${poly([[45, 5], [47, 5]], K)}
  ${dots([[1, 8], [1, 9], [2, 8], [2, 9], [3, 9], [3, 10], [11, 9], [11, 10], [16, 10], [16, 9], [17, 9], [17, 7], [21, 7], [21, 9], [24, 9], [17, 2], [24, 2], [27, 2], [34, 2], [25, 9], [27, 9], [27, 7], [30, 7], [30, 9], [34, 9], [25, 11], [39, 11], [39, 9], [41, 6], [41, 5], [43, 5], [43, 4], [45, 4], [45, 5], [47, 5], [47, 6]], K)}
  <circle cx="19" cy="2" r=".18" fill="none" stroke="#888" stroke-width=".03" stroke-dasharray=".04 .06"/>
  ${planetStage(0, 2.72, 10.05)}${planetStage(10, 2.85, 10.18)}
  ${gearL(20, 19.3, 20, [19.3], [19.65])}
  ${webL(38, 6.5, 8.5, 7.6, RED, -1)}${gearL(38, 5.5, 6.5, [5.5, 6.5], [5.75, 6.25])}${gearL(38, 8.5, 9, [8.5], [8.75])}
  ${[[15, 9], [26, 9]].map((p) => svg`<path d=${`M${p[0]} ${p[1] - 0.5}v.3`} stroke=${PURPLE} stroke-width=".16"/><path d=${`M${p[0] - 0.15} ${p[1] - 0.22}h.3l-.15.270z`} fill=${PURPLE}/>`)}
  ${boxB(2, 8.5, "t")}${boxB(2, 13.5, "b")}${boxB(11, 9.5)}${boxB(11, 12.5)}${boxB(17, 4.5)}${boxB(24, 5.5)}${boxB(17, 17.5)}${boxB(24, 16.5)}
  ${boxB(27, 4.5, "l")}${boxB(27, 17.5, "m")}${boxB(34, 5.5, "r")}
  ${pairB(37, 6)}${pairB(39, 6, "tb")}${pairB(40, 6, "tb")}${pairB(48, 6)}${pairB(50, 6, "tb")}
  ${boxB(37, 8.78)}${boxB(40, 8.78, "l")}${boxB(41, 8.78, "r")}
  ${[[3, 8], [12, 9], [16, 9.7], [22, 2], [25, 10.22], [39, 10.22], [43, 4.73], [45, 4.73], [41, 5.73], [47, 5.73]].map((p) => sw(p[0], p[1], 1))}
  ${[[3, 14], [12, 13], [16, 12.25], [22, 20], [25, 11.78], [39, 11.78], [43, 7.25], [45, 7.25], [41, 6.25], [47, 6.25]].map((p) => sw(p[0], p[1], -1))}
  ${generatorMark(36)}${generatorMark(49)}`;

@customElement("sketch-canvas")
export class SketchCanvas extends LitElement {
  static styles = css`
    :host { display: block; min-height: 0; background: #fff; border: 1px solid #80808c; }
    svg { display: block; width: 100%; height: 100%; }
  `;
  render() {
    return html`<svg role="img" aria-label="Sketcher">
      <defs><pattern id="grid" width="27.940" height="27.940" patternUnits="userSpaceOnUse" x="8" y="19.700">
        <path d="M.7 0V28M0 .7H28" stroke="#e2e2e2" stroke-width="1.400"/></pattern></defs>
      <rect x="2" y="2" width="100%" height="100%" fill="url(#grid)"/>
      <g transform="translate(8.700 20.400) scale(27.940)" stroke-width=".08">${sketch}</g>
    </svg>`;
  }
}

/* -------------------------------------------------------- 3D model view */

const Q = 0.588;
const cyl = (a: number, b: number, r: number, side: string, face: string, r2 = r) => svg`
  <path d=${`M${a} ${-r}L${b} ${-r2}A${Q * r2} ${r2} 0 0 1 ${b} ${r2}L${a} ${r}A${Q * r} ${r} 0 0 1 ${a} ${-r}Z`} fill=${`url(#${side})`}/>
  <ellipse cx=${b} cy="0" rx=${Q * r2} ry=${r2} fill=${face}/>`;
const disc = (s: number, r: number, fill: string) => svg`<ellipse cx=${s} cy="0" rx=${Q * r} ry=${r} fill=${fill}/>`;
const hoop = (s: number, r: number, c: string, w: number, dash = "none") => svg`<ellipse cx=${s} cy="0" rx=${Q * r} ry=${r} fill="none" stroke=${c} stroke-width=${w} stroke-dasharray=${dash}/>`;
const grad = (id: string, stops: [number, string][]) => svg`<linearGradient id=${id} x1="0" y1="0" x2="0" y2="1">
  ${stops.map((s) => svg`<stop offset=${s[0]} stop-color=${s[1]}/>`)}</linearGradient>`;
const planet = (x: number, y: number, r: number) => svg`<g transform=${`translate(${x} ${y}) rotate(35.600)`} opacity=".86">
  ${disc(-6, r, "#4e5558")}${disc(0, r, "#6c6c68")}${hoop(0, r * 0.92, "#5c656a", 2)}${disc(0, r * 0.76, "#978544")}${hoop(0, r * 0.62, "#b59f48", 2)}${disc(0, r * 0.54, "#5f5c4c")}
  ${cyl(-5, 6, r * 0.44, "steel", "#7c8184")}${hoop(6, r * 0.28, "#555", 1.5)}</g>`;

const model = svg`
  <g transform="translate(2415 1363) rotate(35.600)">
    ${cyl(-84, -53, 151, "green", "#00712d")}
    ${cyl(-53, -49, 139, "steelDark", "#777")}
    ${cyl(-50, 0, 145.5, "steel", "#5e6364")}
    ${disc(0, 115.6, "#9f8423")}
    ${disc(0, 110, "url(#goldIn)")}
    <path d="M18 -101l-20 13l-6 -14zM-24 94l24 -6l-2 12z" fill="#6a6450"/>
    ${cyl(-20, 0, 92, "gold", "#9f8423")}
    ${disc(0, 84, "#5e6364")}
    <path d="M-2 -65L200 -41.500L200 42L-2 65A38 65 0 0 1 -2 -65Z" fill="url(#cone)"/>
    <path d="M-34 14L230 9" stroke="#777" stroke-width="1.200"/>
    <path d="M-134 14L-86 13" stroke="#8a8a8a" stroke-width="1"/>
    ${cyl(241, 262, 79.7, "steel", "#5e6364")}
    ${disc(262, 57.5, "#9f8423")}${disc(262, 53.5, "url(#goldIn)")}
    ${cyl(248, 262, 49, "gold", "#9f8423")}
    ${cyl(262, 400, 41, "steel", "#5e6364")}
    <g opacity=".48">${cyl(368, 480, 143, "house", "#888d8f")}</g>
    <g opacity=".97">${cyl(402, 443, 141, "ringBlue", "#446d8b")}</g>
    ${disc(443, 126, "#4a6b82")}
    ${hoop(441, 112, "#2a6b9c", 22, "3 3.500")}
    ${hoop(452, 112, "#4b7390", 22, "2.500 4")}
    ${disc(455, 104, "#5f7682")}${disc(462, 92, "#47606f")}${disc(470, 84, "#66777e")}
  </g>
  ${planet(2824, 1556, 34)}${planet(2742, 1602, 34)}${planet(2724, 1680, 32)}
  <g transform="translate(2415 1363) rotate(35.600)">
    ${cyl(478, 491, 108, "gold", "#8f8038")}
    <g opacity=".35">${cyl(482, 527, 133, "house", "#6d7173")}</g>
    <g opacity=".97">${cyl(491, 518, 117, "ringBlue", "#34586f")}</g>
    ${disc(518, 97, "#55666e")}
    ${hoop(518, 86, "#2d6690", 18, "2 3")}
    ${hoop(526, 80, "#7d8a90", 18, "2.500 5")}
    ${disc(528, 72, "#62696b")}
  </g>
  ${planet(2869, 1617, 31)}${planet(2799, 1681, 31)}${planet(2830, 1738, 22)}
  <g transform="translate(2415 1363) rotate(35.600)">
    ${cyl(529, 546, 52, "gold", "#9f8423")}${disc(546, 46, "url(#goldIn)")}
    ${cyl(546, 563, 42, "steel", "#5e6364")}
    ${cyl(563, 582, 80, "gear", "#0a4f86")}
    ${hoop(563, 80, "#0a3556", 3, "1.500 1.800")}${hoop(569, 80, "#2b87c9", 4, "1.500 1.800")}${hoop(575, 80, "#07395f", 6, "1.500 1.800")}${hoop(582, 80, "#0a4f86", 3, "1.500 1.800")}
    ${disc(582, 80, "#0a5592")}${disc(582, 71, "#1d86d4")}${disc(580, 67.5, "#5e6364")}
    ${cyl(580, 604, 29, "steel", "#5e6364")}
    ${cyl(593, 612, 36, "gold", "#c79e22")}${hoop(612, 33, "#7d6516", 1.5)}
    ${cyl(606, 616, 27, "steel", "#6b7072")}${disc(616, 17, "url(#bore)")}
  </g>
  <g transform="translate(3238.600 1835) rotate(35.600)">
    ${cyl(-418, -408, 18, "green", "#00712d")}
    ${cyl(-406, -388, 24, "gold", "#b58f20")}
    ${cyl(-392, -362, 19, "gear", "#0a4f86")}
    ${[-14, -9, -4, 1, 6, 11].map((y) => svg`<path d=${`M-398 ${y}L-366 ${y + 5}`} stroke="#04263f" stroke-width="1.600"/>`)}
    ${cyl(-366, -349, 24, "gold", "#b58f20")}${disc(-349, 17, "#8a6f18")}
    ${cyl(-349, -322, 13, "steel", "#5e6364")}
    ${cyl(-326, -306, 20, "steel", "#5e6364")}
    ${cyl(-308, -286, 29, "steel", "#5e6364")}
    ${cyl(-286, -240, 16, "steel", "#5e6364")}
    ${cyl(-245, -223, 29, "steel", "#5e6364")}
    ${cyl(-223, -168, 16, "steel", "#5e6364")}
    ${cyl(-173, 0, 80, "green", "#00712d")}
    <clipPath id="mouth"><ellipse cx="0" cy="0" rx="43" ry="73.500"/></clipPath>
    <g clip-path="url(#mouth)">
      <rect x="-50" y="-80" width="100" height="160" fill="url(#greenIn)"/>
      ${cyl(-90, 20, 15, "steel", "#5e6364")}
    </g>
    ${hoop(14, 26, "#c79e22", 4)}${hoop(20, 26, "#e8bd2c", 8)}${hoop(26, 26, "#a8861e", 3)}
    ${cyl(14, 26, 18, "gold", "#a8861e")}
    ${cyl(24, 37, 13.5, "steel", "#686d6f")}
  </g>`;

@customElement("model-view")
export class ModelView extends LitElement {
  static styles = css`
    :host { display: block; min-height: 0; background: #fff; border: 3px solid #000; }
    svg { display: block; width: 100%; height: 100%; }
  `;
  render() {
    return html`<svg viewBox="2043 1129 1441 794" role="img" aria-label="3D">
      <defs>
        ${grad("green", [[0, "#00a040"], [0.12, "#00c04c"], [0.3, "#00a843"], [0.5, "#006b2a"], [0.66, "#00240c"], [0.78, "#006a2b"], [0.88, "#00a440"], [0.94, "#6fe89c"], [0.98, "#00a040"], [1, "#008a38"]])}
        ${grad("steel", [[0, "#777d80"], [0.1, "#9aa1a4"], [0.3, "#868c8f"], [0.5, "#4e5153"], [0.66, "#222324"], [0.8, "#5b5d5f"], [0.93, "#a8acae"], [1, "#6b7073"]])}
        ${grad("steelDark", [[0, "#666"], [0.3, "#777"], [0.62, "#111"], [0.9, "#777"], [1, "#555"]])}
        ${grad("cone", [[0, "#6b7073"], [0.06, "#9aa2a5"], [0.3, "#a0a8ab"], [0.48, "#707578"], [0.66, "#1f2021"], [0.78, "#3a3b3d"], [0.9, "#a5aaad"], [0.97, "#6b6e70"], [1, "#444"]])}
        ${grad("gold", [[0, "#d0a927"], [0.15, "#ffdf3a"], [0.35, "#e2b92f"], [0.62, "#4a3a0a"], [0.8, "#c49c22"], [0.9, "#ffe260"], [1, "#c79e22"]])}
        ${grad("goldIn", [[0, "#ffd93a"], [0.2, "#c49c22"], [0.42, "#5b4a10"], [0.6, "#d8b02a"], [0.8, "#ffdb3a"], [1, "#ffe040"]])}
        ${grad("greenIn", [[0, "#00c04c"], [0.08, "#6fe89c"], [0.2, "#006a2b"], [0.36, "#00240c"], [0.55, "#00903a"], [0.75, "#00bf4a"], [1, "#00c04c"]])}
        ${grad("ringBlue", [[0, "#4b86b3"], [0.12, "#5794c2"], [0.35, "#3a729c"], [0.55, "#1d3b52"], [0.68, "#101f2a"], [0.82, "#36678d"], [0.92, "#5b97c4"], [1, "#3f7aa6"]])}
        ${grad("gear", [[0, "#0a4f86"], [0.3, "#0e5c9c"], [0.55, "#0b3c63"], [0.72, "#0a4878"], [1, "#07406e"]])}
        ${grad("house", [[0, "#8f9395"], [0.2, "#b0b4b6"], [0.55, "#8a8c8d"], [0.7, "#6e7070"], [0.9, "#a5a7a8"], [1, "#8f9395"]])}
        ${grad("bore", [[0, "#444"], [0.4, "#222"], [0.6, "#8a8e90"], [1, "#a0a4a6"]])}
      </defs>
      ${model}
    </svg>`;
  }
}

/* ------------------------------------------------------------------ app */

const MENU = ["文件", "项目", "视图", "模型", "计算", "报告", "图形", "表格", "脚本", "其他", "帮助"];
const MAIN_TOOLS: Tool[] = [
  "doc", "folder", "folderLock", "save", "mail", "restore", "|", "docGrey", "folderGrey", "|",
  { icon: "sigma", tone: "soft", label: "sigma" }, "report", "notepad", { icon: "wrench", tone: "soft", label: "wrench" }, "|",
  "userLock", "grid", "tableIn", "|", "script", "|", "download", "db", "calc", "book",
];
const SKETCH_TOOLS: Tool[] = [
  "axis", "move", "|", "zoomIn", "zoomOut", "zoomFit", "|", "copy", "save", "print", "|",
  { icon: "label", drop: true, label: "label" }, { icon: "list", drop: true, label: "list" }, "pinDoc",
  { icon: "gearSym", tone: "on", label: "gears" }, { icon: "blocks3", tone: "on", label: "blocks" }, { icon: "diag", tone: "on", label: "arrows" },
  "plus", { icon: "blocksV", tone: "on", label: "groups" }, { icon: "blocks4", tone: "on", label: "tiles" }, "|",
];
const VIEW_TOOLS: Tool[] = [
  { icon: "pointer", tone: "on", label: "pointer" }, "move", "zoomRect", "|", "zoomIn", "zoomOut", "zoomFit", "|",
  "sliders", "slidersReset", "text", "|", "play", "|", { icon: "cube", drop: true, label: "cube" }, "|", "docLock", "docImport", "|",
];
const PALETTE: { title: string; items: Tool[]; more?: boolean; all?: string }[] = [
  { title: "轴", items: ["shaft", "|", "shaftStep"] },
  { title: "齿轮", items: ["g1", "g2", "g3", "g4", "g5", "|", "g6"], more: true, all: "gAll" },
  { title: "离合器", items: ["clutch"], all: "clutchAll" },
  { title: "力", items: ["f1", "f2", "f3", "f4"], all: "fAll" },
  { title: "腹板", items: ["web"], all: "webAll" },
  { title: "轴承", items: ["b1", "b2", "b3"], all: "bAll" },
  { title: "开关元件", items: ["sw"], all: "swAll" },
  { title: "功率流", items: ["p1", "p2", "p3"], all: "pAll" },
  { title: "其他元素", items: ["o1", "|", "o2", "|", "o3"] },
  { title: "正齿轮", items: ["s1", "s2", "s3", "s4"], all: "sAll" },
  { title: "更多齿轮", items: ["m1", "m2", "m3", "m4"], all: "sAll" },
];

@customElement("app-root")
export class AppRoot extends LitElement {
  @state() private tab = 0;

  static styles = [
    shared,
    css`
      :host { display: flex; flex-direction: column; position: relative; height: 100vh; overflow: hidden; background: #efefef; color: #000;
        font: 300 33px/40px "DejaVu Sans Condensed", "Noto Sans", "Noto Sans CJK SC", sans-serif; }
      .titlebar { flex: none; height: 57px; display: flex; align-items: center; background: #f3f3f3; border-bottom: 1px solid #000; padding: 0 46px 0 2px; color: #8c8c8c;
        font: 400 29px/40px "Noto Sans", "Noto Sans CJK SC", sans-serif; }
      .badge { width: 40px; height: 40px; margin-right: 12px; display: grid; place-items: center; background: linear-gradient(#1a80c8, #0f5485); color: #fff; font: 700 36px/40px "Open Sans", sans-serif; }
      .titlebar h1 { flex: 1; margin: 0; font: inherit; }
      .win { width: 22px; height: 22px; margin-left: 94px; }
      .win svg { width: 22px; height: 22px; }
      nav { flex: none; height: 62px; display: flex; align-items: center; gap: 48px; padding: 4px 24px 0; background: #fff; border-bottom: 2px solid #f0f0f0; }
      nav a { color: #999; text-decoration: none; }
      .strip { flex: none; height: 99px; display: flex; border-bottom: 3px solid #b8b8b8; }
      .main-tools { display: flex; align-items: center; padding: 0 4px 0 4px; border-right: 2px solid #b8b8b8; }
      .brand { flex: 1; display: flex; align-items: center; justify-content: flex-end; gap: 36px; padding-right: 32px; white-space: nowrap; }
      .release { color: #828282; font: 700 34px/40px "Noto Sans", sans-serif; }
      .logo { color: #1173bd; font: 800 103px/90px "Open Sans", sans-serif; }

      .body { flex: 1; min-height: 0; display: grid; grid-template-columns: 386px 760px minmax(0, 1fr) 759px; column-gap: 14px; padding-top: 3px; }
      .col { display: flex; flex-direction: column; min-height: 0; min-width: 0; }
      .grow { flex: 1; min-height: 0; }

      .tree { margin: 0 26px 0 28px; padding: 4px 0 0; list-style: none; background: #fff; border: 1px solid #80808c; overflow: hidden; }
      .shafts { flex: 1; margin-top: 34px; }
      .tree li { height: 84px; display: flex; align-items: center; padding-left: 24px; white-space: nowrap; }
      .tree .twist { width: 17px; height: 26px; margin-right: 28px; }
      .tree .lock { width: 72px; margin-right: 20px; }
      .tree .item { font-size: 32px; }
      .tree-tools { display: flex; justify-content: flex-end; gap: 30px; padding: 37px 47px 48px 0; }
      .tree-tools button, .tree-tools svg { width: 39px; height: 39px; }
      .tabs { flex: none; display: flex; align-items: flex-start; height: 62px; border-top: 2px solid #aaa; margin-bottom: 15px; }
      .tabs button { height: 55px; border: 1px solid #e0e0e0; border-top: 0; background: #f3f3f3; }
      .tabs .zig { width: 12px; height: 55px; border: 0; }
      .tabs .t1 { width: 105px; padding: 0 26px 0 8px; }
      .tabs .t2 { width: 177px; height: 62px; background: #f9f9f9; margin-top: -2px; padding: 4px 0 0 6px; }
      .tabs .arrow { width: 46px; height: 59px; background: #fdfdfd; }
      .tabs .arrow svg { width: 14px; height: 26px; }
      .project { flex: none; height: 256px; }
      .project .pick { margin: 34px 26px 18px 28px; height: 63px; flex: none; border-color: #d8d8d8; }
      .project .tree { flex: 1; }

      .palette { padding: 34px 16px 0 29px; overflow: hidden; flex: 1; }
      .group { height: 159px; }
      .group h3 { display: flex; align-items: center; gap: 5px; height: 44px; margin: 0 10px 0 5px; padding-top: 4px; font: inherit; white-space: nowrap; }
      .group h3::after { content: ""; flex: 1; height: 6px; background: linear-gradient(#9c9c9c 50%, #fff 50%); margin-bottom: 10px; }
      .row { display: flex; align-items: center; }
      .row .push { flex: 1; }
      .more { width: 72px; height: 89px; color: #333; }
      .more .icon { width: 48px; height: 48px; }
      .row .more { width: 46px; padding-left: 28px; justify-content: center; color: #888; }

      .pane-tabs { flex: none; display: flex; align-items: flex-end; height: 88px; margin-top: -2px; }
      .pane-tab { display: flex; align-items: center; height: 82px; width: 534px; background: #f3f3f3; border: 1px solid #e3e3e3; border-width: 2px 1px 0 0; box-shadow: inset 0 -1px #9a9a9a; padding-right: 58px; }
      .pane-tab.on { height: 88px; width: 546px; background: #f9f9f9; padding-right: 66px; box-shadow: none; }
      .pane-tab .name { flex: 1; height: 100%; padding: 2px 0 0 12px; }
      .pane-tab .x { width: 39px; height: 40px; margin-right: 32px; }
      .pane-tab .x + .x { width: 34px; margin-right: 0; }
      .pane-tab .pf { width: 39px; height: 39px; }
      .pane-tab .pc { width: 38px; height: 38px; }
      .pane { flex: 1; min-height: 0; display: flex; flex-direction: column; background: #f9f9f9; border: 1px solid #e5e5e5; border-top: 0; padding: 38px 37px 0 32px; }
      .bar { flex: none; display: flex; align-items: center; height: 89px; padding-left: 2px; }
      .bar .more { margin: 0 -17px 0 auto; }
      sketch-canvas { flex: 1; margin-top: 25px; }
      .zoom { flex: none; height: 96px; display: flex; align-items: flex-start; padding-top: 20px; gap: 18px; white-space: nowrap; }
      .zoom input { flex: 1; appearance: none; height: 40px; background: none; }
      .zoom input::-webkit-slider-runnable-track { height: 8px; background: #e6e6e6; border: 1px solid #d4d4d4; }
      .zoom input::-webkit-slider-thumb { appearance: none; width: 32px; height: 22px; margin-top: -8px; background: #0078d7; }
      .results { flex: none; height: 36px; margin-top: 15px; overflow: hidden; }

      .sheet { background: #fff; border: 1px solid #80808c; border-right: 0; overflow: hidden; flex: 1; margin-top: 7px; }
      .control { flex: none; height: 478px; margin-bottom: 14px; }
      .control .sheet { display: flex; }
      .form { flex: 1; padding: 31px 28px 0 29px; }
      .track { width: 41px; background: #f0f0f0; padding: 44px 17px 0; }
      .thumb { width: 6px; height: 130px; border-radius: 3px; background: #868686; }
      fieldset { margin: 0 0 16px; border: 1px solid #dcdcdc; padding: 28px 30px; min-width: 0; height: 158px; display: flex; align-items: flex-start; gap: 115px; }
      fieldset legend { padding: 0 6px; margin-left: -6px; }
      fieldset label { padding-top: 6px; }
      fieldset .pick { height: 58px; width: 252px; }
      fieldset .pick.wide { width: 563px; }
      .editor { flex: 1; margin-bottom: 17px; }
      .editor .sheet { display: flex; flex-direction: column; padding: 36px 28px 34px 30px; }
      .editor p { flex: 1; margin: 0; border-bottom: 2px solid #a0a0a0; }
      .third { flex: none; height: 665px; }
      .third .sheet { margin: 34px 26px 0 30px; border-right: 1px solid #ccc; }

      .window { position: absolute; left: 2011px; top: 832px; width: 1505px; height: 1124px; display: flex; flex-direction: column; background: #efefef; border: 3px solid #bdbdbd; border-radius: 14px;
        box-shadow: 0 24px 48px rgba(0, 0, 0, 0.2); padding-bottom: 27px; overflow: hidden; }
      .window header { flex: none; height: 70px; display: flex; align-items: flex-start; justify-content: space-between; background: #f3f3f3; padding: 11px 0 0 13px; font: 400 30px/40px "Noto Sans CJK SC", sans-serif; }
      .window header h2 { margin: 0; font: inherit; }
      .window .shut { width: 51px; height: 52px; background: #c75050; }
      .window .shut svg { width: 14px; height: 14px; }
      .window .pick { flex: none; height: 57px; margin: 26px 27px 24px 27px; }
      .window .bar { margin: 0 27px 25px 28px; }
      .window model-view { flex: 1; margin: 0 26px; }
    `,
  ];

  private treeRow(name: string, kind: string) {
    return html`<li><svg class="twist" viewBox="0 0 17 26" aria-hidden="true"><path d="M4 2l10 11-10 11" fill="none" stroke="#888" stroke-width="2"/></svg>
      ${icon(kind)}<span class="lock">${icon("lock")}</span><span class="item">${name}</span></li>`;
  }

  private paneTab(name: string, i: number) {
    return html`<div class=${classMap({ "pane-tab": true, on: this.tab === i })}>
      <button class="name" role="tab" aria-selected=${this.tab === i} @click=${() => (this.tab = i)}>${name}</button>
      <button class="x" aria-label="float">${floatIcon("pf", "#505050")}</button>
      <button class="x" aria-label="close">${crossIcon("pc", "#505050", 0.9)}</button></div>`;
  }

  render() {
    return html`
      <div class="titlebar">
        <span class="badge">K</span>
        <h1>KISSsoft - 许可证编号 1113 - 系统模块 - 16 Wind Turbine Gearbox.S20</h1>
        <button class="win" aria-label="minimize"><svg viewBox="0 0 22 22"><path d="M1 11h20" stroke="#999" stroke-width="2"/></svg></button>
        <button class="win" aria-label="restore"><svg viewBox="0 0 22 22"><path d="M6 5v-1q0-2 2-2h9q3 0 3 3v9q0 2-2 2" fill="none" stroke="#999" stroke-width="2"/><rect x="2" y="6" width="14" height="14" rx="2" fill="none" stroke="#999" stroke-width="2"/></svg></button>
        <button class="win" aria-label="close"><svg viewBox="0 0 22 22"><path d="M1 1l20 20M21 1l-20 20" stroke="#999" stroke-width="2"/></svg></button>
      </div>
      <nav>${MENU.map((m) => html`<a href="#">${m}</a>`)}</nav>
      <div class="strip">
        <div class="main-tools">${tools(MAIN_TOOLS)}</div>
        <div class="brand"><span class="release">Release 2025</span><span class="logo">KISSsoft</span></div>
      </div>

      <div class="body">
        <div class="col">
          <dock-panel class="grow" heading="轴视图">
            <ul class="tree shafts">${["Main", "Pla...", "Pla...", "Gen"].map((n) => this.treeRow(n, "shaft"))}</ul>
            <div class="tree-tools">
              <button aria-label="expand all"><svg viewBox="0 0 13 13"><path d="M3 .5h9.500v10M.5 3.500h9v9h-9zM5 5.500v5M2.500 8h5" fill="none" stroke=${LINE}/></svg></button>
              <button aria-label="collapse all"><svg viewBox="0 0 13 13"><path d="M3 .5h9.500v10M.5 3.500h9v9h-9zM2.500 8h5" fill="none" stroke=${LINE}/></svg></button>
            </div>
            <div class="tabs">
              <svg class="zig" viewBox="0 0 12 55" aria-hidden="true"><path d="M0 6l9 14-9 13 9 12-9 10" fill="none" stroke="#aaa" stroke-width="2"/></svg>
              <button class="t1">项目</button><button class="t2">轴视图</button>
              <button class="arrow" aria-label="previous"><svg viewBox="0 0 14 26"><path d="M14 0v26l-14-13z"/></svg></button>
              <button class="arrow" aria-label="next"><svg viewBox="0 0 14 26"><path d="M0 0v26l14-13z" fill="#999"/></svg></button>
            </div>
          </dock-panel>
          <dock-panel class="project" heading="项目视图">
            <div class="pick"><select aria-label="项目视图"><option>齿啮合</option></select>${chevron}</div>
            <ul class="tree">${this.treeRow("zs1...", "s2")}</ul>
          </dock-panel>
        </div>

        <dock-panel heading="元素框">
          <div class="palette">
            ${PALETTE.map((g) => html`<section class="group"><h3>${g.title}</h3>
              <div class="row">${tools(g.items)}<span class="push"></span>
                ${g.more ? html`<button class="more" aria-label="more">${icon("more")}</button>` : nothing}
                ${g.all ? html`<button class="tool" aria-label=${g.title}>${icon(g.all)}</button>` : nothing}</div></section>`)}
          </div>
        </dock-panel>

        <div class="col">
          <div class="pane-tabs" role="tablist">${["Sketcher", "边界条件", "系统数据"].map((n, i) => this.paneTab(n, i))}</div>
          <div class="pane">
            <div class="bar">${tools(SKETCH_TOOLS)}<button class="more" aria-label="more">${icon("more")}</button></div>
            <sketch-canvas></sketch-canvas>
            <div class="zoom"><label for="symbol">符号大小</label><input id="symbol" type="range" min="0" max="100" value="37" /></div>
          </div>
          <dock-panel class="results" heading="结果（基本计算）"></dock-panel>
        </div>

        <div class="col">
          <dock-panel class="control" heading="控制面板">
            <div class="sheet">
              <div class="form">
                <fieldset><legend>计算的设置</legend><label for="kind">计算类型</label>
                  <div class="pick"><select id="kind"><option>计算运动学特性</option></select>${chevron}</div></fieldset>
                <fieldset><legend>载荷谱</legend>
                  <div class="pick wide"><select aria-label="载荷谱"><option>使用额定载荷计算 (H = 20000 h)</option></select>${chevron}</div></fieldset>
                <fieldset><legend>工作状态</legend></fieldset>
              </div>
              <div class="track"><div class="thumb"></div></div>
            </div>
          </dock-panel>
          <dock-panel class="editor" heading="元素编辑器"><div class="sheet"><p>没有选择元素</p></div></dock-panel>
          <dock-panel class="third"><div class="sheet"></div></dock-panel>
        </div>
      </div>

      <section class="window">
        <header><h2>图形</h2><button class="shut" aria-label="close"><svg viewBox="0 0 14 14"><path d="M2 3l10 8M12 3l-10 8" stroke="#fff" stroke-width="2.500"/></svg></button></header>
        <div class="pick"><select aria-label="图形"><option>3D 系统图示</option></select>${chevron}</div>
        <div class="bar">${tools(VIEW_TOOLS)}<button class="more" aria-label="more">${icon("more")}</button></div>
        <model-view></model-view>
      </section>
    `;
  }
}
